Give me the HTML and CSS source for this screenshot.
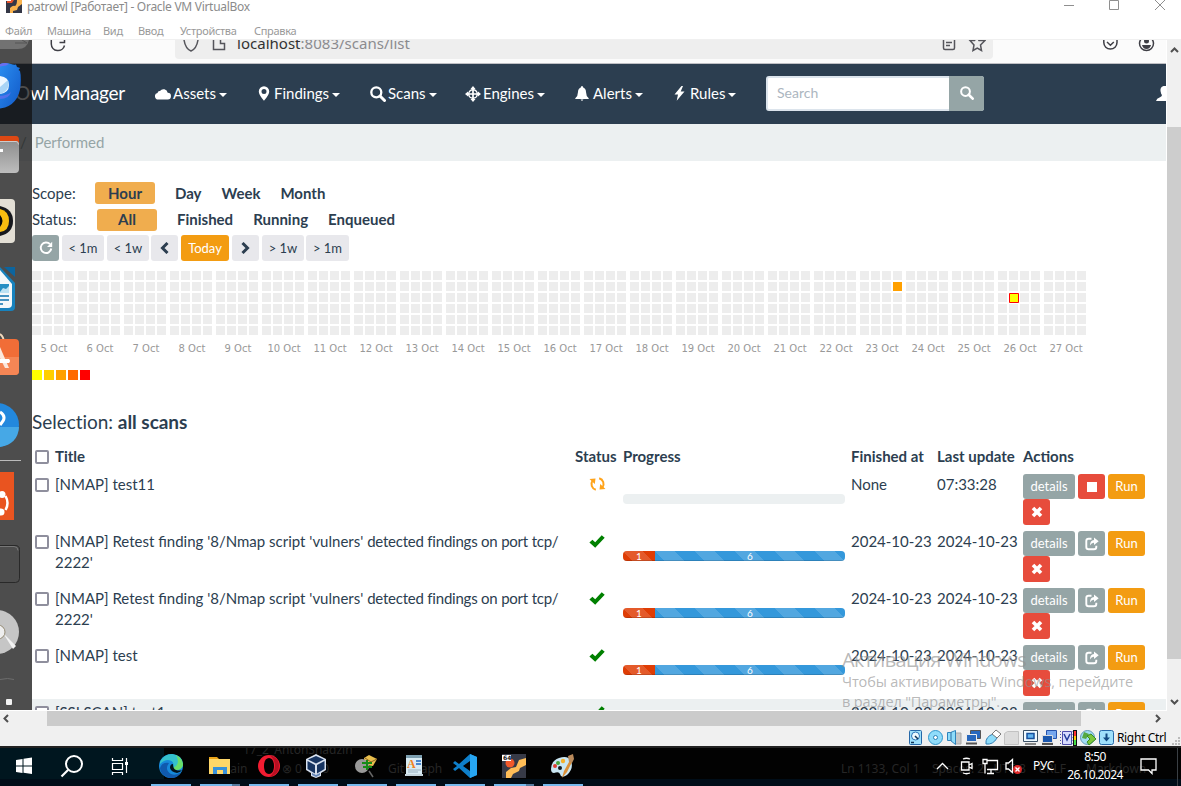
FILE: index.html
```html
<!DOCTYPE html>
<html lang="ru">
<head>
<meta charset="utf-8">
<title>patrowl [Работает] - Oracle VM VirtualBox</title>
<link rel="stylesheet" href="styles.css">
</head>
<body>
<svg class="defs" width="0" height="0">
  <defs>
    <symbol id="i-search" viewBox="0 0 16 16"><circle cx="6.3" cy="6.3" r="5" fill="none" stroke="currentColor" stroke-width="2.3"/><path d="M10 10l4.500 4.500" stroke="currentColor" stroke-width="3" stroke-linecap="round"/></symbol>
    <symbol id="i-ok" viewBox="0 0 16 13"><path d="M.4 7.500L3.400 4.800 6.200 7.200 12.700.3 15.700 2.800 6.200 12.700z" fill="#008000"/></symbol>
    <symbol id="i-x" viewBox="0 0 12 12"><path d="M2 2l8 8M10 2l-8 8" stroke="currentColor" stroke-width="3.600"/></symbol>
    <symbol id="i-share" viewBox="0 0 14 14"><path d="M6.500 1.800H3.600Q1.300 1.800 1.300 4v6Q1.300 12.300 3.600 12.300H9Q11.300 12.300 11.300 10V8.800" fill="none" stroke="currentColor" stroke-width="1.900"/><path d="M9 .6L13.700 4.300 9 8V5.800Q6.500 5.600 5 8.500 5 3.200 9 2.900z" fill="currentColor"/></symbol>
    <pattern id="day" width="46" height="11" patternUnits="userSpaceOnUse"><path d="M0 0h9v9H0zM11 0h9v9h-9zM22 0h9v9h-9zM33 0h9v9h-9z" fill="#ededed"/></pattern>
  </defs>
</svg>

<header class="titlebar">
  <svg class="appicon" width="16" height="13" viewBox="0 0 16 13"><path d="M0 0h16v13H0z" fill="#343746"/><path d="M1 0h7l-2 3H1z" fill="#e5532c"/><path d="M4 13V8q3-3 5-2 2-1 2-6h5v4l-4 3-1 3-4 1v2z" fill="#f9b34e"/><path d="M0 0h5v1H0z" fill="#fff"/></svg>
  <span class="wintitle">patrowl [Работает] - Oracle VM VirtualBox</span>
  <svg class="winctl" width="110" height="13" viewBox="0 0 110 13" fill="none" stroke="#8f8f8f"><path d="M4 5.500h10M49.500 .5h9v9h-9zM95 0l10 10M105 0L95 10"/></svg>
</header>
<nav class="menubar"><span>Файл</span><span>Машина</span><span>Вид</span><span>Ввод</span><span>Устройства</span><span>Справка</span></nav>

<div class="vm">
  <div class="guest">
    <div class="browser">
      <svg class="reload" width="16" height="12" viewBox="0 0 16 12" fill="none" stroke="#3f3f46" stroke-width="1.500"><path d="M1.300 0v4A6.700 6.700 0 0 0 14.500 5.500M9.500 2.500h5V-3"/></svg>
      <div class="url">
        <svg width="46" height="13" viewBox="0 0 46 13" fill="none" stroke="#55555b" stroke-width="1.500"><path d="M1 0Q2.500 9 8 11 13.500 9 15 0M30.500 0v9.500h11V3.500h-4V0"/></svg>
        <span class="addr"><b>localhost</b>:8083/scans/list</span>
        <svg class="urlicons" width="44" height="13" viewBox="0 0 44 13" fill="none" stroke="#55555b" stroke-width="1.500"><path d="M1.500 0v8q0 1.500 1.500 1.500h8q1.500 0 1.500-1.500V0M4 2.500h6M4 5.500h4M28 .5h4.500L35-3l2 3.500h6L38.500 5l1 5.500-4.200-2.500-4.300 2.500 1-5.500z"/></svg>
      </div>
      <svg class="acct" width="52" height="13" viewBox="0 0 52 13" fill="none" stroke="#3f3f46" stroke-width="1.500"><path d="M.8 0v2.500a6.600 6.600 0 0 0 13.200 0V0M4 2l3.400 3.200L10.800 2"/><circle cx="43.500" cy="3.500" r="7"/><circle cx="43.500" cy="1" r="2.500" fill="#3f3f46" stroke="none"/><path d="M39 5h9q-1 4-4.500 4T39 5" fill="#3f3f46" stroke="none"/></svg>
    </div>
    <div class="navbar">
      <span class="brand">Owl Manager</span>
      <a class="nav n1"><svg width="16" height="12" viewBox="0 0 16 12"><path d="M3.500 11.500A3.300 3.300 0 0 1 2.500 5 2.300 2.300 0 0 1 5 3 4.300 4.300 0 0 1 12.700 4.800 3.300 3.300 0 0 1 12.500 11.500z" fill="#fff"/></svg>Assets<i></i></a>
      <a class="nav n2"><svg width="12" height="15" viewBox="0 0 12 15"><path d="M6 .3a5.200 5.200 0 0 0-5.200 5.200C.8 9 6 14.700 6 14.700s5.200-5.700 5.200-9.200A5.200 5.200 0 0 0 6 .3zm0 7.800a2.500 2.500 0 1 1 0-5 2.500 2.500 0 0 1 0 5z" fill="#fff"/></svg>Findings<i></i></a>
      <a class="nav n3"><svg width="16" height="16"><use href="#i-search"/></svg>Scans<i></i></a>
      <a class="nav n4"><svg width="16" height="16" viewBox="0 0 16 16"><circle cx="8" cy="8" r="4.300" fill="none" stroke="#fff" stroke-width="1.500"/><path d="M8 2v12M2 8h12" stroke="#fff" stroke-width="1.700"/><path d="M8 0l2.500 3h-5zM8 16l2.500-3h-5zM0 8l3-2.500v5zM16 8l-3-2.500v5z" fill="#fff"/></svg>Engines<i></i></a>
      <a class="nav n5"><svg width="14" height="15" viewBox="0 0 14 15"><path d="M7 0q1.200 0 1.200 1.500Q11 2.500 11 6q0 4 2.700 6.200v.8H.3v-.8Q3 10 3 6 3 2.500 5.800 1.500 5.800 0 7 0zM5.500 13.500h3L7 15z" fill="#fff"/></svg>Alerts<i></i></a>
      <a class="nav n6"><svg width="11" height="15" viewBox="0 0 11 15"><path d="M7.500 0L.5 8.500H4L2.700 14.700 10.500 5.500H6.700L9 0z" fill="#fff"/></svg>Rules<i></i></a>
      <div class="search"><span>Search</span><b><svg width="14" height="14"><use href="#i-search"/></svg></b></div>
      <svg class="user" width="10" height="15" viewBox="0 0 10 15"><path d="M10 0H7.500Q4 1 4.500 5q.5 3 1.500 4 0 1.500-2 2.200Q.5 12.500 0 15h10z" fill="#fff"/></svg>
    </div>
    <div class="crumb"><span>/</span>Performed</div>
    <main>
      <div class="filter"><span class="lbl">Scope:</span><b class="pill">Hour</b><b>Day</b><b>Week</b><b>Month</b></div>
      <div class="filter second"><span class="lbl">Status:</span><b class="pill">All</b><b>Finished</b><b>Running</b><b>Enqueued</b></div>
      <div class="range">
        <span class="btn grey w27"><svg width="14" height="14" viewBox="0 0 14 14"><path d="M11 3.200A5.300 5.300 0 1 0 12.300 7.500" fill="none" stroke="#fff" stroke-width="1.900"/><path d="M13.200 .8V6H8z" fill="#fff"/></svg></span>
        <span class="btn light w42">&lt; 1m</span><span class="btn light w42">&lt; 1w</span>
        <span class="btn light w27 tight"><svg width="9" height="12" viewBox="0 0 9 12"><path d="M7.500 1L2.500 6l5 5" fill="none" stroke="#2c3e50" stroke-width="3"/></svg></span>
        <span class="btn orange w48">Today</span>
        <span class="btn light w27"><svg width="9" height="12" viewBox="0 0 9 12"><path d="M1.500 1l5 5-5 5" fill="none" stroke="#2c3e50" stroke-width="3"/></svg></span>
        <span class="btn light w42">&gt; 1w</span><span class="btn light w43 tight">&gt; 1m</span>
      </div>
      <svg class="heat" width="1060" height="64" viewBox="0 0 1060 64"><path d="M0 0h1058v64H0z" fill="url(#day)"/><path d="M861 11h9v9h-9z" fill="#ffa000"/><path d="M977.500 22.500h9v9h-9z" fill="#ff0" stroke="#f00"/></svg>
      <div class="days"><span>5 Oct</span><span>6 Oct</span><span>7 Oct</span><span>8 Oct</span><span>9 Oct</span><span>10 Oct</span><span>11 Oct</span><span>12 Oct</span><span>13 Oct</span><span>14 Oct</span><span>15 Oct</span><span>16 Oct</span><span>17 Oct</span><span>18 Oct</span><span>19 Oct</span><span>20 Oct</span><span>21 Oct</span><span>22 Oct</span><span>23 Oct</span><span>24 Oct</span><span>25 Oct</span><span>26 Oct</span><span>27 Oct</span></div>
      <div class="legend"><i class="c1"></i><i class="c2"></i><i class="c3"></i><i class="c4"></i><i class="c5"></i></div>
      <h2>Selection: <b>all scans</b></h2>
      <div class="row head"><div><i class="box"></i></div><div>Title</div><div>Status</div><div>Progress</div><div>Finished at</div><div>Last update</div><div>Actions</div></div>
      <div class="row"><div><i class="box"></i></div><div>[NMAP] test11</div>
        <div class="st sync"><svg width="17" height="16" viewBox="0 0 17 16"><path d="M6.800 13.800A6 6 0 0 1 3.600 4.500M10.200 2.200a6 6 0 0 1 3.200 9.300" fill="none" stroke="#ffa31a" stroke-width="2"/><path d="M.5 3L6.500 2.500 5.800 8zM16.500 13L10.500 13.500 11.200 8z" fill="#ffa31a"/></svg></div>
        <div><div class="bar"></div></div><div>None</div><div>07:33:28</div>
        <div class="acts"><span class="btn grey w52">details</span><span class="btn red w27"><i class="stop"></i></span><span class="btn orange w37">Run</span><span class="btn red w27"><svg width="12" height="12"><use href="#i-x"/></svg></span></div></div>
      <div class="row"><div><i class="box"></i></div><div>[NMAP] Retest finding '8/Nmap script 'vulners' <span class="narrow">detected findings on port tcp/</span><br>2222'</div>
        <div class="st"><svg width="16" height="13"><use href="#i-ok"/></svg></div>
        <div><div class="bar"><span class="hi">1</span><span class="lo">6</span></div></div><div>2024-10-23</div><div>2024-10-23</div>
        <div class="acts"><span class="btn grey w52">details</span><span class="btn grey w27"><svg width="14" height="14"><use href="#i-share"/></svg></span><span class="btn orange w37">Run</span><span class="btn red w27"><svg width="12" height="12"><use href="#i-x"/></svg></span></div></div>
      <div class="row"><div><i class="box"></i></div><div>[NMAP] Retest finding '8/Nmap script 'vulners' <span class="narrow">detected findings on port tcp/</span><br>2222'</div>
        <div class="st"><svg width="16" height="13"><use href="#i-ok"/></svg></div>
        <div><div class="bar"><span class="hi">1</span><span class="lo">6</span></div></div><div>2024-10-23</div><div>2024-10-23</div>
        <div class="acts"><span class="btn grey w52">details</span><span class="btn grey w27"><svg width="14" height="14"><use href="#i-share"/></svg></span><span class="btn orange w37">Run</span><span class="btn red w27"><svg width="12" height="12"><use href="#i-x"/></svg></span></div></div>
      <div class="row"><div><i class="box"></i></div><div>[NMAP] test</div>
        <div class="st"><svg width="16" height="13"><use href="#i-ok"/></svg></div>
        <div><div class="bar"><span class="hi">1</span><span class="lo">6</span></div></div><div>2024-10-23</div><div>2024-10-23</div>
        <div class="acts"><span class="btn grey w52">details</span><span class="btn grey w27"><svg width="14" height="14"><use href="#i-share"/></svg></span><span class="btn orange w37">Run</span><span class="btn red w27"><svg width="12" height="12"><use href="#i-x"/></svg></span></div></div>
      <div class="row alt"><div><i class="box"></i></div><div>[SSLSCAN] test1</div>
        <div class="st"><svg width="16" height="13"><use href="#i-ok"/></svg></div>
        <div></div><div>2024-10-23</div><div>2024-10-23</div>
        <div class="acts"><span class="btn grey w52">details</span><span class="btn grey w27"><svg width="14" height="14"><use href="#i-share"/></svg></span><span class="btn orange w37">Run</span></div></div>
    </main>
    <svg class="dock" width="32" height="670" viewBox="0 40 32 670">
      <defs>
        <linearGradient id="bird" x1="0" y1="0" x2="1" y2="1"><stop offset="0" stop-color="#2a8df0"/><stop offset="1" stop-color="#1259c8"/></linearGradient>
        <linearGradient id="gr" x1="0" y1="0" x2="0" y2="1"><stop offset="0" stop-color="#8e8e8e"/><stop offset="1" stop-color="#bdbdbd"/></linearGradient>
      </defs>
      <path d="M0 40h29Q27 49 18 49H0z" fill="#727272"/><path d="M15 43h12l-5-3" fill="none" stroke="#555"/>
      <path d="M0 64q6-2 11 0 3 1 5 .5l1 2.500 3 1-1.500 2 1.500 1q1 4 .8 9Q21 102 5 107.500L0 108.500z" fill="url(#bird)"/><path d="M0 64q5-2 9 0l-3 1.500-6 1z" fill="#6a6ff0"/><path d="M0 76q9 1 9 9 0 8-9 9z" fill="#eef7ff"/><path d="M0 87l8-7q3 10-8 14z" fill="#a9d4f6"/><path d="M0 96q8-1 11-4-2 7-11 7z" fill="#6a6ff0" opacity=".7"/>
      <path d="M0 136h16q3 0 3 4v10H0z" fill="#dd4814"/><path d="M0 141h16q3 0 3 4v24q0 4-4 4H0z" fill="url(#gr)"/><path d="M0 141.500h16q2.500 0 2.500 3" fill="none" stroke="#ccc"/><path d="M0 149h3v3H0z" fill="#fff"/>
      <path d="M0 199h11q4 0 4 4v36q0 4-4 4H0z" fill="#e3dfd5"/><path d="M0 206q13 3 13 15T0 236z" fill="#16181d"/><path d="M0 209q9 2 9 12T0 232z" fill="#f9bd10"/><path d="M0 215q5 6 0 12z" fill="#0a0a0a"/>
      <path d="M0 267l15 16v24q0 4-4 4H0z" fill="#1782bd"/><path d="M4 267h11v10z" fill="#0c659f"/><path d="M0 270l12 14v20q0 4-4 4H0z" fill="#f4f8fa"/><path d="M0 284h9v9H0z" fill="#268fc4"/><path d="M0 292l3-4 3 1 3-3v7H0z" fill="#bde2f3"/><path d="M0 296h9M0 300h9M0 304h3" stroke="#0c72ae" stroke-width="1.500"/>
      <path d="M0 334q4 3 4 9" fill="none" stroke="#f3d9bc" stroke-width="2"/><path d="M0 339h15q4 0 4 4v28q0 4-4 4H0z" fill="#f16d37"/><path d="M0 357h19v14q0 4-4 4H0z" fill="#f58655"/><path d="M0 347l9 21H5L0 358z" fill="#fbe8de"/><path d="M0 359h9q2 2 0 4H0z" fill="#fff"/>
      <circle cx="-3" cy="425" r="22" fill="#2388dd"/><path d="M0 427h19q-1 17-19 20z" fill="#46a8e6"/><path d="M0 412q6 4 3 9l-3 4" fill="none" stroke="#fff" stroke-width="3"/>
      <path d="M0 460.500h21" stroke="#bbb"/><path d="M0 472h14v48H0z" fill="#e95420"/><circle cx="2" cy="494.500" r="3.500" fill="#fff"/><circle cx="1" cy="512" r="3.500" fill="#fff"/><path d="M5.500 496q4 7 0 14" fill="none" stroke="#fff" stroke-width="2.500"/>
      <path d="M0 545.500h15q4.500 0 4.500 4v29q0 4-4 4H0" fill="#4d4d4d" stroke="#292929"/><path d="M0 546.500h14q4 0 4 4" fill="none" stroke="#777"/>
      <circle cx="-3" cy="632" r="22" fill="#c6c6c6"/><path d="M3 633l13 13-3 3z" fill="#f3f3f3"/><circle cx="-2" cy="632" r="7" fill="#eee" stroke="#958b75"/><path d="M0 679.500q8-2 14 0" stroke="#6d6d6d" fill="none"/>
      <rect x="6" y="699" width="6" height="6" rx="1" fill="#f2f2f2"/>
    </svg>
    <div class="watermark"><div class="wm1">Активация Windows</div><div class="wm2">Чтобы активировать Windows, перейдите</div><div class="wm3">в раздел "Параметры".</div></div>
  </div>
  <div class="vscroll"><svg width="14" height="87" viewBox="0 0 14 87"><path d="M4 12l3.500-3.500L11 12" fill="none" stroke="#505050" stroke-width="2"/></svg><div class="vthumb"></div><svg width="14" height="51" viewBox="0 0 14 51"><path d="M4 41l3.500 3.500L11 41" fill="none" stroke="#505050" stroke-width="2"/></svg></div>
</div>
<div class="hscroll"><svg width="47" height="15"><path d="M8 4L4.500 7.500 8 11" fill="none" stroke="#505050" stroke-width="2"/></svg><div class="hthumb"></div><svg width="86" height="15"><path d="M75 4l3.500 3.500L75 11" fill="none" stroke="#505050" stroke-width="2"/></svg></div>
<div class="status">
  <svg width="200" height="18" viewBox="908 729 200 18" stroke-width="1">
    <rect x="909.500" y="730.500" width="12" height="14" rx="1" fill="#9fe0fb" stroke="#2668a8"/><circle cx="915.500" cy="736" r="4" fill="#eefaff" stroke="#2774b8"/><path d="M911 742.500h3M915 736l3 3" stroke="#135" stroke-width="1.500"/>
    <circle cx="935.500" cy="737.500" r="7" fill="#8fdcfa" stroke="#3197cc"/><circle cx="935.500" cy="737.500" r="2" fill="#fff" stroke="#2a80b5"/>
    <path d="M955 733h6v11h-6z" fill="#c8c8c8" stroke="#aaa"/><path d="M947.500 732.500h3l5-2v14l-5-4h-3z" fill="#8edcfa" stroke="#2e83bb"/><path d="M951 732v9" stroke="#286aa0"/>
    <path d="M970.500 730.500h10v8h-10z" fill="#2868bd" stroke="#555"/><path d="M966.500 734.500h10v7h-10z" fill="#2868bd" stroke="#eee"/><path d="M966 743.500h11" stroke="#555" stroke-width="2"/>
    <path d="M986 744q-1-7 7-10l4 4q-4 7-11 6z" fill="#8edcfa" stroke="#3180b5"/><path d="M992 734l4-4 5 4-4 4z" fill="#fff" stroke="#777"/>
    <path d="M1004.500 733.500l3-2h11v13h-14z" fill="#dcdcdc" stroke="#c2c2c2"/>
    <path d="M1023.500 730.500h14v11h-14z" fill="#f0faff" stroke="#3b5167"/><path d="M1027 733.500h7v5h-7z" fill="#62b4ef" stroke="#154f9d" stroke-width="1.500"/><path d="M1025 744h11" stroke="#888" stroke-width="2"/>
    <path d="M1046.500 730.500h10v8h-10z" fill="#75a7ee" stroke="#2653ab"/><path d="M1042.500 735.500h10v7h-10z" fill="#1b57ad" stroke="#ddd"/><path d="M1042 744h11" stroke="#555" stroke-width="2"/>
    <path d="M1062.500 731.500h9v13h-9z" fill="#d8dcff" stroke="#5050ac"/><path d="M1064 734l3 6 3-6" fill="none" stroke="#243d9b" stroke-width="1.500"/><path d="M1060.500 731v14M1073 731v14" stroke="#5050ac" stroke-dasharray="1 2"/><path d="M1073 730h4v16h-4z" fill="#111"/><path d="M1074 731h2v5h-2z" fill="#f33"/><path d="M1074 736h2v4h-2z" fill="#fc0"/><path d="M1074 740h2v5h-2z" fill="#4d4"/>
    <circle cx="1087.500" cy="737.500" r="7" fill="#a2dcf4" stroke="#6196b4"/><path d="M1084 732l5 2-3 5-4-1z" fill="#55a843"/><path d="M1087 736l4-2 5 5-7 6-2-3 3-3z" fill="#7cc63c" stroke="#388b24"/>
    <rect x="1099.500" y="730.500" width="14" height="14" rx="2" fill="#9fe0fb" stroke="#2668a8"/>
    <path d="M1105.500 733.500h2v4h2.500l-3.500 4-3.500-4h2.500z" fill="#124a82"/>
  </svg><span class="host">Right Ctrl</span>
  <svg class="grip" width="9" height="9"><path d="M6 1h2M3 4h2M6 4h2M0 7h2M3 7h2M6 7h2" stroke="#bbb" stroke-width="2"/></svg>
</div>

<footer class="taskbar">
  <div class="ghosts"><span class="g1">17_2_AntonShadzin</span><span class="g2">main</span><span class="g3">⊗ 0 &nbsp;⚠ 0</span><span class="g4">Git Graph</span><span class="g5">Ln 1133, Col 1</span><span class="g6">Spaces: 2 &nbsp; UTF-8 &nbsp; &nbsp;CRLF</span><span class="g7">Markdown</span></div>
  <div class="sys">
    <svg width="150" height="36" viewBox="0 750 150 36"><path d="M16 760l6.500-1v6.500H16zM23.500 758.800L32 757.500v8h-8.500zM16 766.500h6.500v6.500L16 772zM23.500 766.500H32v7.500l-8.500-1.200z" fill="#fff"/><circle cx="74" cy="764" r="8" fill="none" stroke="#fff" stroke-width="2"/><path d="M68 770l-6.500 6.500" stroke="#fff" stroke-width="2.200"/><path d="M112.500 758v2.500h10V758M112.500 763.500h10v6h-10zM112.500 775v-2.500h10v2.500M126.500 758v15" fill="none" stroke="#fff" stroke-width="1.200"/><path d="M125 762h3v3h-3z" fill="#fff"/></svg>
  </div>
  <div class="apps">
    <span class="app"><svg width="24" height="24" viewBox="0 0 24 24"><circle cx="12" cy="12" r="12" fill="#1689db"/><path d="M1 8Q5 0 13 0q11 1 11 11-1 5-7 5-4 0-3-3 2-6-5-7-4 0-8 4z" fill="#35c1cc"/><path d="M17 1q7 4 7 10-1 5-7 5-3 0-3-2 8-4 3-13z" fill="#69df6a"/><path d="M10 9q-5 7 2 11 5 2 10-2-4 7-12 6Q1 21 1 14q2-6 9-5z" fill="#105aae"/><path d="M14 10q-3 0-3 4 1 4 7 5 4-1 5-3-3 1-6 0t-3-6" fill="#02131d"/></svg></span>
    <span class="app multi"><svg width="24" height="24" viewBox="0 0 24 24"><path d="M1 3h8l2 2h11v4H1z" fill="#eaa318"/><path d="M1 5h21v15H1z" fill="#ffd769"/><path d="M5 13h14v7h-4v-4H9v4H5z" fill="#3891da"/></svg></span>
    <span class="app"><svg width="24" height="24" viewBox="0 0 24 24"><path fill-rule="evenodd" d="M12 1a11 11 0 1 0 0 22 11 11 0 0 0 0-22zm0 3c3 0 5 3 5 8s-2 8-5 8-5-3-5-8 2-8 5-8z" fill="#f21c31"/><path d="M12 1q10 2 10 11T12 23q6-4 6-11T12 1" fill="#b80f22"/></svg></span>
    <span class="app"><svg width="24" height="24" viewBox="2 0 24 24"><path d="M12 0l10 5v11l-5 3v3l-5 2-5-2v-3l-5-3V5z" fill="#d7e0ee"/><path d="M12 2l8 3.500-8 4L4 5.500zM3.500 7l7.500 4v8.500L3.500 15zM20.500 7L13 11v8.500l7.500-4.500z" fill="#173461"/><path d="M8 19l4 2 4-2v2l-4 2-4-2z" fill="#6687b8"/></svg></span>
    <span class="app"><svg width="24" height="24" viewBox="0 0 24 24"><path d="M9 4l5-3 8 4-4 7-8-1z" fill="#e9bf4d"/><path d="M10 4l6 4 6-3" fill="none" stroke="#8a6421"/><circle cx="7" cy="12" r="7" fill="#999"/><path d="M14 17l4 6" stroke="#666" stroke-width="1.500"/><path d="M12 6v10M7 9h10M8 13h9" stroke="#168a16" stroke-width="2"/></svg></span>
    <span class="app"><svg width="24" height="24" viewBox="0 0 24 24"><path d="M2 1h16v20H2z" fill="#d8ebf4"/><path d="M2 1h16v3H2z" fill="#7c9fb0"/><path d="M1 20h18v2H1z" fill="#c5d5dd"/><path d="M12 7h5M12 10h5" stroke="#4a87cf" stroke-width="2"/><path d="M4 16h13M4 18h10" stroke="#9ab0bd"/><text x="3" y="14" class="wpa">A</text></svg></span>
    <span class="app"><svg width="24" height="24" viewBox="0 0 24 24"><path d="M17 0l7 3v18l-7 3L6 14l-4 3-2-2 4-3-4-3 2-2 4 3zM17 7l-7 5 7 5z" fill="#0e7fca" fill-rule="evenodd"/><path d="M17 0l7 3v18l-7 3z" fill="#27a6f2"/></svg></span>
    <span class="app multi"><svg width="24" height="24" viewBox="0 0 24 24"><path d="M0 0h24v24H0z" fill="#373a47"/><circle cx="8" cy="9" r="4.500" fill="#f2592a"/><path d="M4 24v-6l5-4 5-1 3-7 7-2v7l-6 3-1 3-6 3-2 4z" fill="#ffbd57"/><path d="M0 1h9v6H0z" fill="#fff"/><text x="1" y="6" class="b64">64</text></svg></span>
    <span class="app"><svg width="24" height="24" viewBox="0 0 24 24"><path d="M0 15Q0 7 8 4q9-3 12 3 3 8-4 14-6 4-7-1-1-3-6-1-3 0-3-4z" fill="#c9e6f2"/><circle cx="4" cy="12" r="2" fill="#df3f35"/><circle cx="7" cy="9" r="2" fill="#49a63c"/><circle cx="12" cy="7" r="2.200" fill="#f6b12a"/><circle cx="9" cy="14" r="2" fill="#121a20"/><path d="M18 8l-5 9-2 7 5-6 5-10z" fill="#dc8f36"/><path d="M17 2l5-2 1 5-2 4-3-1z" fill="#b98a5b"/></svg></span>
  </div>
  <div class="tray">
    <svg width="90" height="36" viewBox="935 748 90 36" fill="none" stroke="#fff" stroke-width="1.300"><path d="M937 769l5.500-5.500 5.500 5.500M961.500 762h7.500v8h-7.500zM969 765l3-1.500v5l-3-1.500M963 759q3.500-1.500 7 0M963 773q3.500 1.500 7 0M987 760.500h10.500v9H987M983 759.500h4v4h-4zM985 763.500v10M987 773.500h7M991 769v4M1006 763v6h2.500l4 3.500v-13l-4 3.500z"/><circle cx="1017.500" cy="769.500" r="4.500" fill="#e02b2b" stroke="none"/><path d="M1015.500 767.500l4 4M1019.500 767.500l-4 4"/></svg>
    <span class="lang">РУС</span>
    <span class="clock"><span>8:50</span><span class="date">26.10.2024</span></span>
    <svg width="18" height="18" viewBox="0 0 18 18"><path d="M1 2h15v11h-4v3.500L8.500 13H1z" fill="none" stroke="#fff" stroke-width="1.300"/></svg>
    <i class="peek"></i>
  </div>
</footer>
</body>
</html>
```
FILE: styles.css
```css
* { box-sizing: border-box; }
body { margin: 0; width: 1181px; height: 786px; overflow: hidden; background: #fff; font-family: Lato, sans-serif; font-size: 15px; line-height: 21px; color: #2c3e50; }
i { font-style: normal; }
svg { display: block; flex: none; }
.defs { position: absolute; }

.titlebar { height: 18px; display: flex; align-items: flex-start; padding-left: 6px; font: 12px/13px "Noto Sans", sans-serif; color: #8b8b8b; }
.wintitle { margin-left: 5px; letter-spacing: -.29px; white-space: nowrap; }
.winctl { margin-left: auto; margin-right: 11px; }
.menubar { height: 22px; border-bottom: 1px solid #f0f0f0; padding: 5px 0 0 5px; display: grid; grid-template-columns: 42px 56px 35px 42px 74px 1fr; font: 11px/15px "Noto Sans", sans-serif; color: #999; letter-spacing: -.3px; }

.vm { display: flex; height: 671px; }
.guest { position: relative; width: 1166px; height: 670px; overflow: hidden; margin-right: 1px; }
.browser { height: 24px; background: #fbfbfb; border-bottom: 1px solid #bfbfc4; display: flex; align-items: flex-start; padding-left: 50px; }
.reload { margin-right: 109px; }
.url { width: 818px; height: 19px; background: #eee; border-radius: 0 0 4px 4px; display: flex; padding: 0 8px; }
.addr { margin: -7px 0 0 8px; font: 15px/20px "Noto Sans", sans-serif; color: #8b8b8f; letter-spacing: .02px; white-space: nowrap; }
.addr b { font-weight: 400; color: #333; }
.urlicons { margin-left: auto; margin-right: -1px; }
.acct { margin-left: 110px; }

.navbar { height: 60px; background: #2c3e50; color: #fff; display: grid; grid-template-columns: 140px 103px 112px 95px 110px 99px 92px 218px 1fr; padding: 0 0 2px 15px; align-items: center; }
.brand { font-size: 19px; letter-spacing: -.28px; margin-top: -1px; white-space: nowrap; }
.nav { display: flex; align-items: center; white-space: nowrap; padding-top: 1px; }
.nav svg { margin-right: 2px; }
.nav i { border: 4px solid transparent; border-top-color: #fff; border-bottom: 0; margin: 3px 0 0 3px; }
.n2 svg, .n5 svg { margin-right: 4px; }
.n6 svg { margin-right: 5px; }
.search { width: 218px; height: 35px; display: flex; background: #fff; border: 2px solid #dce4ec; border-radius: 3px; color: #acb6c0; font-size: 14px; justify-content: space-between; align-items: center; padding-left: 9px; }
.search span { margin-top: -1px; }
.search b { width: 35px; height: 35px; margin-right: -2px; background: #95a5a6; color: #fff; border-radius: 0 3px 3px 0; display: grid; place-items: center; }
.user { justify-self: end; }
.crumb { height: 37px; background: #ecf0f1; color: #95a5a6; padding: 8px 0 0 20px; display: flex; gap: 8px; }
main { padding: 21px 0 0 32px; }

.filter { display: flex; height: 22px; align-items: center; gap: 20px; line-height: 22px; }
.lbl { width: 43px; }
.second .lbl { width: 45px; }
.second { margin-top: 5px; line-height: 20px; }
.second > * { padding-bottom: 2px; }
.pill { width: 60px; height: 22px; border-radius: 3px; background: #f0ad4e; text-align: center; }
.range { display: flex; gap: 3px; margin-top: 4px; }
.btn { display: flex; align-items: center; justify-content: center; height: 26px; border-radius: 3px; font-size: 13px; line-height: 19px; color: #fff; }
.grey { background: #95a5a6; }
.red { background: #e74c3c; }
.orange { background: #f39c12; }
.light { background: #e8e8ec; color: #2c3e50; }
.tight { margin-left: -1px; }
.w27 { width: 27px; }
.w37 { width: 37px; }
.w42 { width: 42px; }
.w43 { width: 43px; }
.w48 { width: 48px; }
.w52 { width: 52px; }
.heat { margin-top: 10px; }
.days { display: flex; margin-top: 8px; font: 10px/12px "DejaVu Sans", sans-serif; color: #999; }
.days span { width: 46px; padding-right: 2px; text-align: center; }
.legend { display: flex; gap: 2px; margin-top: 15px; }
.legend i { width: 10px; height: 10px; }
.c1 { background: #ff0; }
.c2 { background: #ffcf00; }
.c3 { background: #ffa000; }
.c4 { background: #ff6a00; }
.c5 { background: #f00; }
h2 { margin: 31px 0 0; height: 32px; font-size: 19px; line-height: 22px; font-weight: 400; letter-spacing: -.04px; }

.row { display: grid; grid-template-columns: 20px 520px 48px 228px 86px 86px 130px; height: 57px; width: 1134px; }
.row > div { padding: 3px 0 0 3px; white-space: nowrap; }
.head { height: 28px; font-weight: 700; }
.alt { background: #ecf0f1; }
.narrow { letter-spacing: -.22px; }
.box { display: block; width: 14px; height: 14px; margin-top: 4px; border: 2px solid #8f8f9d; border-radius: 2px; background: #fff; }
.st svg { margin: 4px auto 0; }
.sync svg { margin-top: 2px; }
.row > .st { padding-left: 2px; padding-right: 0; }
.bar { display: flex; width: 222px; height: 10px; margin-top: 20px; border-radius: 4px; overflow: hidden; background: #ecf0f1; font-size: 10px; line-height: 11px; color: #fff; text-align: center; }
.bar span { background-image: linear-gradient(45deg, rgba(255,255,255,.15) 25%, transparent 25% 50%, rgba(255,255,255,.15) 50% 75%, transparent 75%); background-size: 40px 40px; box-shadow: inset 0 -1px rgba(0,0,0,.15); }
.hi { width: 32px; background-color: #df3d05; }
.lo { width: 190px; background-color: #3498db; }
.row > .acts { display: flex; flex-wrap: wrap; align-content: flex-start; column-gap: 3px; }
.acts .btn:nth-child(-n+3) { height: 25px; }
.stop { width: 10px; height: 10px; background: #fff; }

.dock { position: absolute; left: 0; top: 0; background: rgba(18,18,18,.75); }
.watermark { position: absolute; left: 842px; top: 607px; font-family: "Open Sans", sans-serif; color: rgba(145,145,145,.65); white-space: nowrap; }
.wm1 { font-size: 20px; line-height: 25px; letter-spacing: -.6px; }
.wm2, .wm3 { font-size: 14.500px; line-height: 20px; letter-spacing: -.15px; }

.vscroll { width: 14px; height: 671px; background: #f0f0f0; }
.vthumb { height: 532px; background: #cdcdcd; }
.hscroll { height: 15px; background: #f0f0f0; display: flex; }
.hthumb { width: 1034px; background: #cbcbcb; }
.status { height: 20px; background: #f0f0f0; display: flex; padding: 3px 0 0 908px; font: 12px/17px "Noto Sans", sans-serif; color: #000; }
.status svg:first-child { overflow: visible; }
.host { margin-left: 9px; width: 50px; letter-spacing: -.35px; white-space: nowrap; }
.grip { margin: 8px 0 0 5px; }

.taskbar { position: relative; height: 40px; border-top: 2px solid #222; background: linear-gradient(transparent 31px, #000d18 31px), linear-gradient(90deg, #00161f 164px, #020202 164px); display: flex; color: #fff; font-family: "Noto Sans", sans-serif; }
.sys { padding-top: 2px; width: 151px; }
.apps { display: flex; gap: 9px; height: 38px; }
.app { position: relative; width: 40px; height: 38px; padding: 6px 8px 0; border-bottom: 2px solid #76b9ed; }
.multi { border-image: linear-gradient(90deg, #76b9ed 31px, #547a9e 31px) 2; border-width: 0 0 2px; border-style: solid; }
.wpa { font: bold 12px "Liberation Serif", serif; fill: #f28322; }
.b64 { font: bold 6px "DejaVu Sans", sans-serif; fill: #111; }
.tray { position: relative; display: flex; margin-left: 352px; align-items: flex-start; width: 246px; }
.tray > svg { margin: 0; }
.clock + svg { margin: 9px 0 0 14px; }
.peek { width: 1px; height: 38px; margin-left: 19px; background: #3a3f44; }
.lang { margin: 9px 0 0 8px; width: 24px; font-size: 12px; line-height: 17px; letter-spacing: -.1px; }
.clock { width: 60px; margin-left: 8px; font-size: 12px; line-height: 18px; letter-spacing: -.6px; display: flex; flex-direction: column; align-items: center; white-space: nowrap; }
.clock + svg { margin-left: 15px; }
.ghosts { position: absolute; left: 0; top: 0; width: 1181px; height: 38px; overflow: hidden; font-size: 12px; line-height: 16px; color: #262626; white-space: nowrap; }
.ghosts span { position: absolute; top: 13px; }
.ghosts .g1 { left: 243px; top: -6px; }
.g2 { left: 219px; }
.g3 { left: 282px; }
.g4 { left: 388px; }
.g5 { left: 841px; }
.g6 { left: 932px; }
.g7 { left: 1086px; }
```
